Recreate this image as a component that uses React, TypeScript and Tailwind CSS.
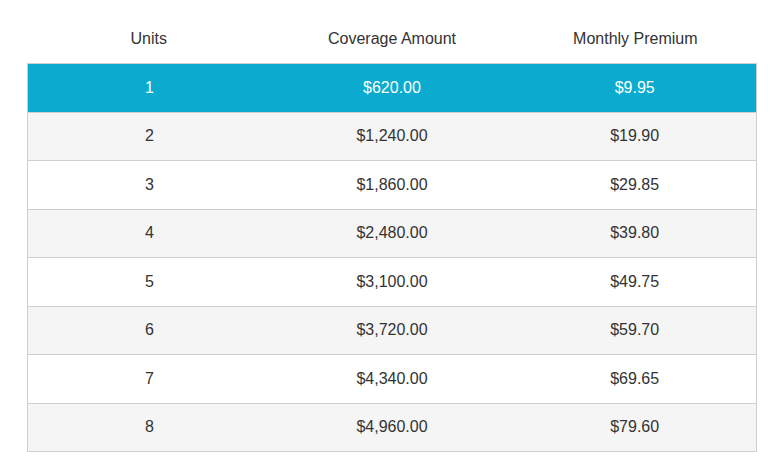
const rows = [
  { units: "1", coverage: "$620.00", premium: "$9.95" },
  { units: "2", coverage: "$1,240.00", premium: "$19.90" },
  { units: "3", coverage: "$1,860.00", premium: "$29.85" },
  { units: "4", coverage: "$2,480.00", premium: "$39.80" },
  { units: "5", coverage: "$3,100.00", premium: "$49.75" },
  { units: "6", coverage: "$3,720.00", premium: "$59.70" },
  { units: "7", coverage: "$4,340.00", premium: "$69.65" },
  { units: "8", coverage: "$4,960.00", premium: "$79.60" },
]

export default function App() {
  return (
    <div className="min-h-screen bg-white pt-[15px] pl-[27px] font-['Liberation_Sans',Arial,sans-serif] text-[16px] text-[#333]">
      <div className="w-[730px]">
        <div className="grid h-[48px] grid-cols-3 items-center text-center">
          <div>Units</div>
          <div>Coverage Amount</div>
          <div>Monthly Premium</div>
        </div>
        <div className="border-x border-b border-[#cfcfcf]">
          {rows.map((r, i) => (
            <div
              key={r.units}
              className={
                i === 0
                  ? "grid h-[48.5px] grid-cols-3 items-center border-t border-[#cfcfcf] bg-[#0aabce] text-center text-white"
                  : i % 2 === 1
                  ? "grid h-[48.5px] grid-cols-3 items-center border-t border-[#cfcfcf] bg-[#f5f5f5] text-center"
                  : "grid h-[48.5px] grid-cols-3 items-center border-t border-[#cfcfcf] bg-white text-center"
              }
            >
              <div>{r.units}</div>
              <div>{r.coverage}</div>
              <div>{r.premium}</div>
            </div>
          ))}
        </div>
      </div>
    </div>
  )
}
